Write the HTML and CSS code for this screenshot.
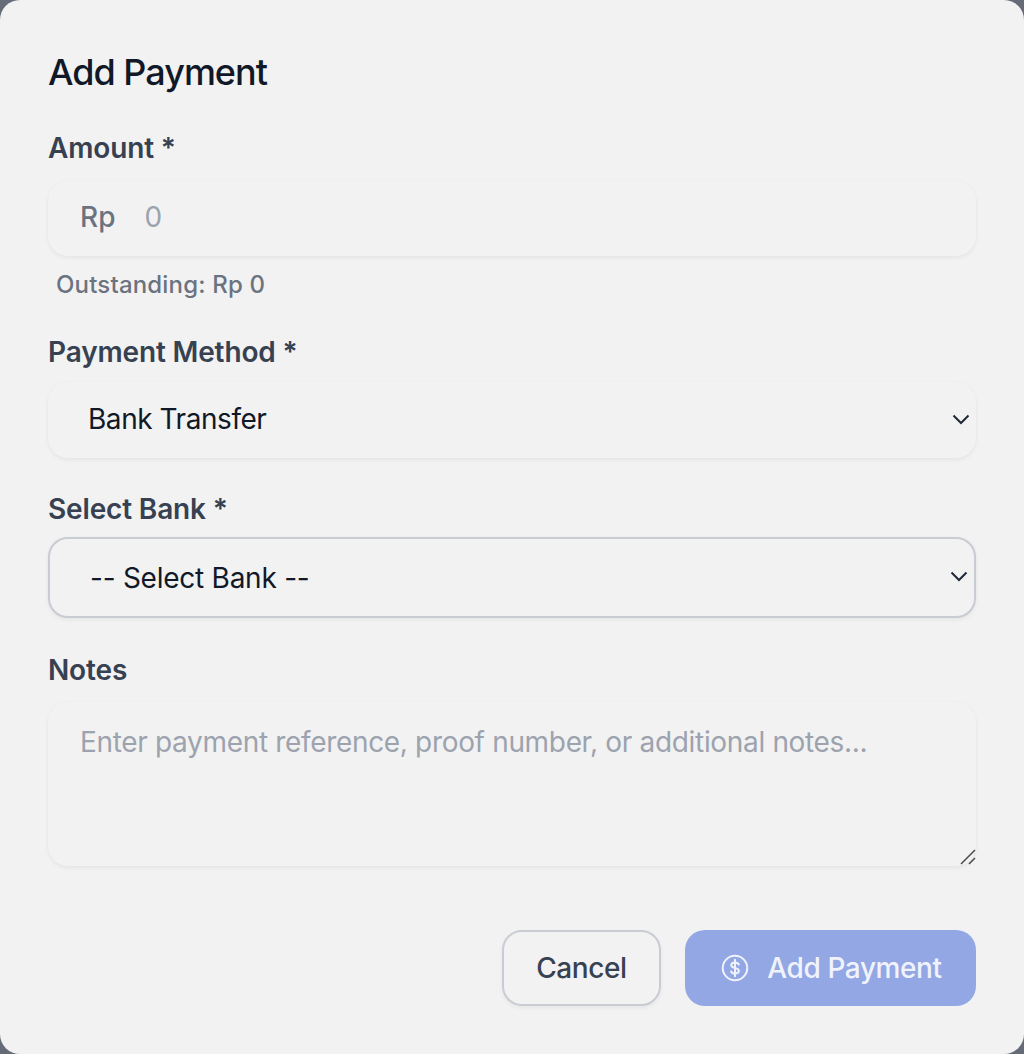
FILE: index.html
```html
<!DOCTYPE html>
<html lang="en">
<head>
    <meta charset="UTF-8">
    <meta name="viewport" content="width=device-width, initial-scale=1.0">
    <title>Add Payment</title>
    <link rel="stylesheet" href="styles.css">
</head>
<body>
    <form class="modal">
        <h2 class="modal-title">Add Payment</h2>

        <div class="field field-amount">
            <label class="field-label" for="amount">Amount *</label>
            <div class="amount-box">
                <span class="amount-prefix">Rp</span>
                <input type="text" id="amount" class="amount-input" placeholder="0">
            </div>
            <p class="field-hint">Outstanding: Rp 0</p>
        </div>

        <div class="field field-method">
            <label class="field-label" for="method">Payment Method *</label>
            <div class="select-wrap">
                <select id="method" class="select-box">
                    <option>Bank Transfer</option>
                </select>
                <svg class="select-arrow" width="20" height="20" viewBox="0 0 20 20" fill="none"><path d="M2.500 6.500 10 14l7.500-7.500" stroke="#1f2937" stroke-width="2"/></svg>
            </div>
        </div>

        <div class="field field-bank">
            <label class="field-label" for="bank">Select Bank *</label>
            <div class="select-wrap">
                <select id="bank" class="select-box select-outlined">
                    <option>-- Select Bank --</option>
                </select>
                <svg class="select-arrow arrow-outlined" width="20" height="20" viewBox="0 0 20 20" fill="none"><path d="M2.500 6.500 10 14l7.500-7.500" stroke="#1f2937" stroke-width="2"/></svg>
            </div>
        </div>

        <div class="field field-notes">
            <label class="field-label" for="notes">Notes</label>
            <div class="notes-wrap">
                <textarea id="notes" class="notes-box" placeholder="Enter payment reference, proof number, or additional notes..."></textarea>
                <svg class="resize-grip" width="16" height="16" viewBox="0 0 16 16" fill="none"><path d="M1 15 15 1M9 15l6-6" stroke="#4b4b4b" stroke-width="1.500"/></svg>
            </div>
        </div>

        <div class="modal-actions">
            <button type="button" class="btn btn-cancel">Cancel</button>
            <button type="button" class="btn btn-submit">
                <svg width="28" height="28" viewBox="0 0 24 24" fill="none" stroke="#f0f3fb" stroke-width="1.700" stroke-linecap="round"><circle cx="12" cy="12" r="10.500"/><path d="M15.300 9c-.5-1.100-1.700-1.800-3.300-1.800-1.800 0-3.200 1-3.200 2.400 0 3.100 6.500 1.700 6.500 4.800 0 1.400-1.400 2.400-3.300 2.400-1.500 0-2.800-.7-3.300-1.800M12 5v14"/></svg>
                Add Payment
            </button>
        </div>
    </form>
</body>
</html>
```

FILE: styles.css
```css
* {
    box-sizing: border-box;
}
html, body {
    margin: 0;
    height: 100%;
}
body {
    background: #666b78;
    font-family: Inter, "Liberation Sans", sans-serif;
}
.modal {
    height: 1054px;
    padding: 48px;
    background: #f2f2f2;
    border-radius: 20px;
}
.modal-title {
    margin: 0;
    font-size: 36px;
    line-height: 48px;
    font-weight: 500;
    letter-spacing: -1px;
    color: #111827;
}
.field-label {
    display: block;
    font-size: 28px;
    line-height: 40px;
    font-weight: 600;
    letter-spacing: -0.15px;
    color: #374151;
}
.field-amount {
    margin-top: 32px;
}
.field-amount .field-label {
    margin-bottom: 12px;
}
.field-method {
    margin-top: 31px;
}
.field-method .field-label {
    margin-bottom: 10px;
}
.field-bank {
    margin-top: 31px;
}
.field-bank .field-label {
    margin-bottom: 8px;
}
.field-notes {
    margin-top: 32px;
}
.field-notes .field-label {
    margin-bottom: 12px;
}
.amount-box,
.select-box,
.notes-box {
    width: 100%;
    background: #f2f2f2;
    border: 0;
    border-radius: 20px;
    box-shadow: 0 2px 4px rgba(0, 0, 0, 0.05), 0 0 2px rgba(0, 0, 0, 0.03);
    font-family: inherit;
    outline: none;
}
.amount-box {
    display: flex;
    align-items: center;
    height: 76px;
    padding: 0 0 3px 32px;
}
.amount-prefix {
    font-size: 28px;
    font-weight: 500;
    color: #6b7280;
}
.amount-input {
    flex: 1;
    margin-left: 29px;
    padding: 0;
    border: 0;
    background: none;
    font-family: inherit;
    font-size: 28px;
    outline: none;
}
.amount-input::placeholder,
.notes-box::placeholder {
    color: #9ca3af;
    opacity: 1;
}
.field-hint {
    margin: 13px 0 0 8px;
    font-size: 24px;
    line-height: 32px;
    font-weight: 500;
    letter-spacing: 0.18px;
    color: #6b7280;
}
.select-wrap,
.notes-wrap {
    position: relative;
}
.select-box {
    display: block;
    height: 76px;
    padding: 0 40px 2px;
    appearance: none;
    font-size: 28px;
    letter-spacing: -0.45px;
    color: #111827;
}
.select-outlined {
    height: 81px;
    padding: 0 40px;
    border: 2px solid #c9ccd3;
    letter-spacing: -0.25px;
}
.select-arrow {
    position: absolute;
    top: 27px;
    right: 5px;
}
.arrow-outlined {
    top: 29px;
    right: 7px;
}
.notes-wrap {
    height: 164px;
}
.notes-box {
    display: block;
    height: 164px;
    padding: 22px 32px;
    resize: none;
    font-size: 28px;
    line-height: 36px;
    letter-spacing: -0.33px;
    color: #111827;
}
.resize-grip {
    position: absolute;
    right: 0;
    bottom: 1px;
}
.modal-actions {
    display: flex;
    justify-content: flex-end;
    gap: 24px;
    margin-top: 64px;
}
.btn {
    display: flex;
    align-items: center;
    justify-content: center;
    height: 76px;
    border-radius: 20px;
    font-family: inherit;
    font-size: 28px;
    font-weight: 500;
    letter-spacing: -0.4px;
}
.btn-cancel {
    width: 159px;
    background: #f2f2f2;
    border: 2px solid #c9ccd3;
    box-shadow: 0 2px 4px rgba(0, 0, 0, 0.05);
    color: #374151;
}
.btn-submit {
    width: 291px;
    gap: 18px;
    padding: 0 0 0 2px;
    background: #93a7e4;
    border: 0;
    color: #f0f3fb;
}
```
